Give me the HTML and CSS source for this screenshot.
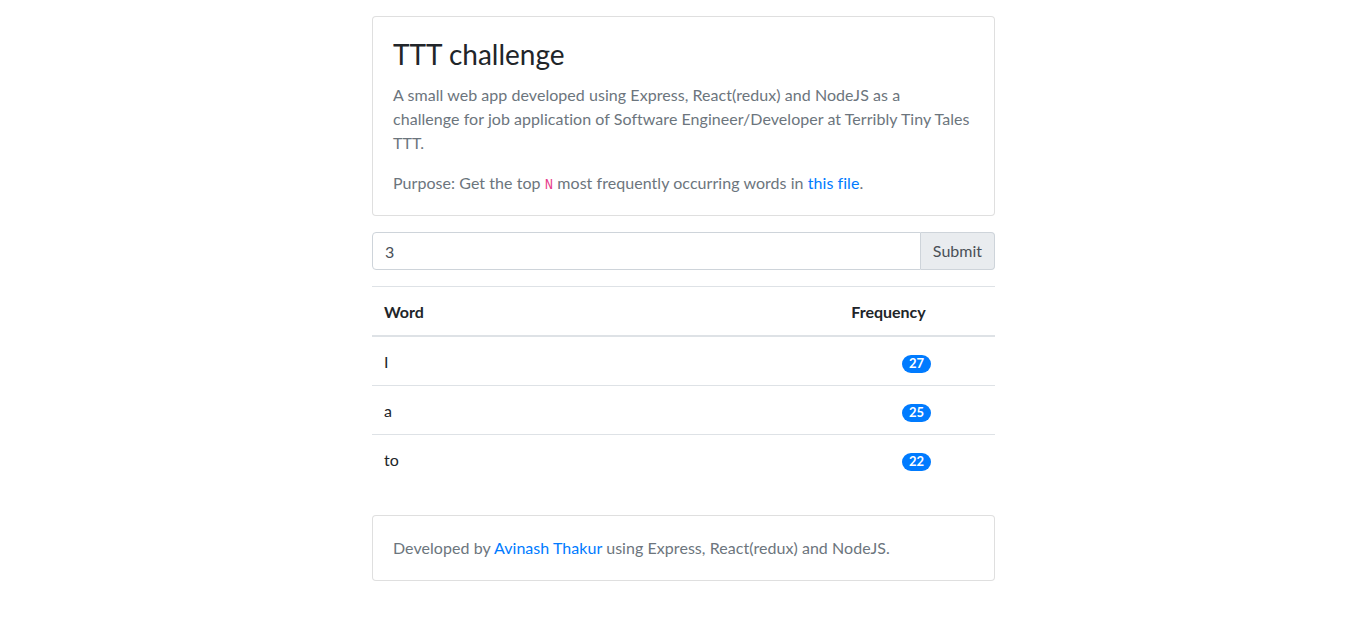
FILE: index.html
```html
<!DOCTYPE html>
<html lang="en">
<head>
<meta charset="utf-8">
<title>TTT challenge</title>
<link rel="stylesheet" href="styles.css">
</head>
<body>
<main class="container">
  <section class="card intro">
    <div class="card-body">
      <h2 class="card-title">TTT challenge</h2>
      <p class="card-text">A small web app developed using Express, React(redux) and NodeJS as a<br>challenge for job application of Software Engineer/Developer at Terribly Tiny Tales<br>TTT.</p>
      <p class="card-text">Purpose: Get the top <code>N</code> most frequently occurring words in <a href="#">this file</a>.</p>
    </div>
  </section>

  <form class="input-group">
    <input class="form-control" type="text" value="3">
    <button class="btn" type="button">Submit</button>
  </form>

  <table class="table">
    <thead>
      <tr><th class="col-word">Word</th><th class="col-freq">Frequency</th></tr>
    </thead>
    <tbody>
      <tr><td>I</td><td class="center"><span class="badge">27</span></td></tr>
      <tr><td>a</td><td class="center"><span class="badge">25</span></td></tr>
      <tr><td>to</td><td class="center"><span class="badge">22</span></td></tr>
    </tbody>
  </table>

  <footer class="card footer">
    <div class="card-body">
      <p class="card-text">Developed by <a href="#">Avinash Thakur</a> using Express, React(redux) and NodeJS.</p>
    </div>
  </footer>
</main>
</body>
</html>
```

FILE: styles.css
```css
* { box-sizing: border-box; }
html, body { margin: 0; padding: 0; }
body {
  font-family: "Lato", "Open Sans", sans-serif;
  font-size: 16px;
  line-height: 1.5;
  color: #212529;
  background: #fff;
}
.container {
  width: 623px;
  margin: 16px 0 0 calc(50% - 311px);
  display: flex;
  flex-direction: column;
}
.card {
  border: 1px solid rgba(0,0,0,.125);
  border-radius: 4px;
  background: #fff;
}
.card-body { padding: 20px; }
.card-title {
  margin: 0 0 12px;
  font-size: 28px;
  font-weight: 400;
  line-height: 34px;
  color: #212529;
}
.card-text {
  margin: 0 0 16px;
  color: #6c757d;
  white-space: nowrap;
  letter-spacing: 0.05px;
}
.card-text:last-child { margin-bottom: 0; }
code {
  font-family: "Liberation Mono", "DejaVu Sans Mono", monospace;
  font-size: 87.5%;
  line-height: 1;
  color: #e83e8c;
}
a { color: #007bff; text-decoration: none; }

.input-group {
  display: flex;
  margin: 16px 0 16px;
}
.form-control {
  flex: 1;
  height: 38px;
  padding: 6px 12px;
  font: inherit;
  color: #495057;
  border: 1px solid #ced4da;
  border-radius: 4px 0 0 4px;
  background: #fff;
}
.btn {
  height: 38px;
  padding: 6px 12px;
  font: inherit;
  color: #495057;
  background: #e9ecef;
  border: 1px solid #ced4da;
  border-left: 0;
  border-radius: 0 4px 4px 0;
}

.table {
  width: 100%;
  border-collapse: collapse;
  margin-bottom: 16px;
}
.table th, .table td {
  padding: 13px 12px 11px;
  text-align: left;
  border-top: 1px solid #dee2e6;
  vertical-align: top;
}
.table th { font-weight: 700; }
.table thead th { border-bottom: 2px solid #dee2e6; }
.col-word { width: 75%; }
.table td.center { text-align: center; padding-right: 13px; }
.badge {
  display: inline-block;
  padding: 2.5px 7px;
  font-size: 13px;
  font-weight: 700;
  line-height: 1;
  color: #fff;
  background: #007bff;
  border-radius: 160px;
  vertical-align: baseline;
}
.footer { margin-top: 16px; }
```
